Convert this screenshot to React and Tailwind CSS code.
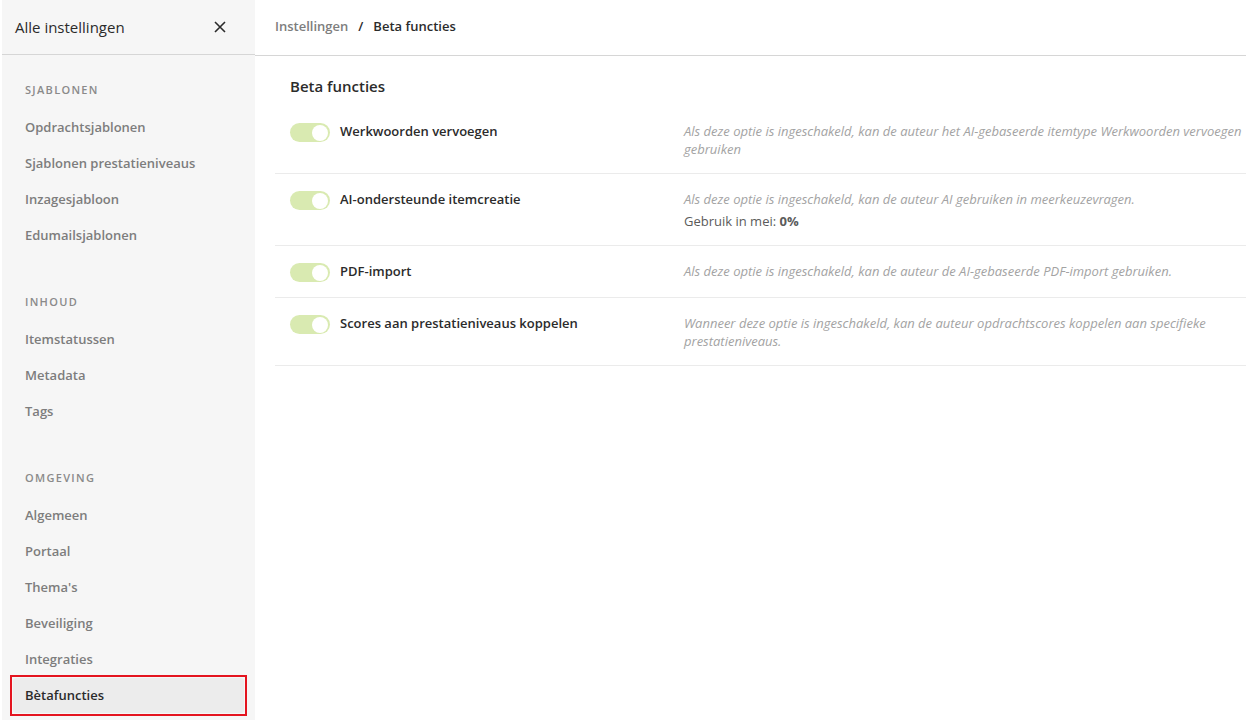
import React from "react";

const SECTIONS = [
  {
    title: "Sjablonen",
    items: ["Opdrachtsjablonen", "Sjablonen prestatieniveaus", "Inzagesjabloon", "Edumailsjablonen"],
  },
  { title: "Inhoud", items: ["Itemstatussen", "Metadata", "Tags"] },
  {
    title: "Omgeving",
    items: ["Algemeen", "Portaal", "Thema's", "Beveiliging", "Integraties", "Bètafuncties"],
  },
];

const FEATURES = [
  {
    label: "Werkwoorden vervoegen",
    desc: "Als deze optie is ingeschakeld, kan de auteur het AI-gebaseerde itemtype Werkwoorden vervoegen gebruiken",
  },
  {
    label: "AI-ondersteunde itemcreatie",
    desc: "Als deze optie is ingeschakeld, kan de auteur AI gebruiken in meerkeuzevragen.",
    usage: true,
  },
  {
    label: "PDF-import",
    desc: "Als deze optie is ingeschakeld, kan de auteur de AI-gebaseerde PDF-import gebruiken.",
  },
  {
    label: "Scores aan prestatieniveaus koppelen",
    desc: "Wanneer deze optie is ingeschakeld, kan de auteur opdrachtscores koppelen aan specifieke prestatieniveaus.",
  },
];

function Toggle() {
  return (
    <div className="w-[40px] h-[19px] mt-[1px] rounded-full bg-[#d9eab1] flex items-center justify-end pr-[2px] shrink-0">
      <div className="w-[16px] h-[16px] rounded-full bg-white" />
    </div>
  );
}

export default function App() {
  return (
    <div
      className="flex w-[1246px] h-[720px] bg-white overflow-hidden text-[#2b2b2b]"
      style={{ fontFamily: '"Open Sans", "Noto Sans", sans-serif' }}
    >
      {/* Sidebar */}
      <aside className="w-[255px] shrink-0 bg-[#f6f6f6] flex flex-col border-l-2 border-white">
        <div className="h-[55px] flex items-center justify-between pl-[13px] pr-[29px] border-b border-[#d6d6d6]">
          <span className="text-[15px] text-[#2b2b2b]">Alle instellingen</span>
          <svg width="12" height="12" viewBox="0 0 12 12" className="text-[#2b2b2b]">
            <path d="M1 1 L11 11 M11 1 L1 11" stroke="currentColor" strokeWidth="1.6" fill="none" />
          </svg>
        </div>
        <nav className="flex flex-col pt-[17px]">
          {SECTIONS.map((s, si) => (
            <div key={s.title} className={si > 0 ? "mt-[30px]" : ""}>
              <div className="h-[36px] flex items-center pl-[23px] text-[11px] font-semibold uppercase tracking-[0.12em] text-[#8a8a8a]">
                {s.title}
              </div>
              <div className="flex flex-col pt-[2px]">
                {s.items.map((it) => {
                  const active = it === "Bètafuncties";
                  return active ? (
                    <div key={it} className="mx-[8px] border-2 border-[#e4141f] p-[1px] h-[41px] -mt-[3px]">
                      <div className="h-full bg-[#ececec] rounded-[3px] flex items-center pl-[12px] text-[13px] font-semibold text-[#2b2b2b]">
                        {it}
                      </div>
                    </div>
                  ) : (
                    <div key={it} className="h-[36px] flex items-center pl-[23px] text-[13px] font-semibold text-[#7d7d7d]">
                      {it}
                    </div>
                  );
                })}
              </div>
            </div>
          ))}
        </nav>
      </aside>

      {/* Main */}
      <main className="flex-1 flex flex-col min-w-0">
        <div className="h-[56px] flex items-center pl-[20px] pb-[2px] border-b border-[#d6d6d6] text-[13px]">
          <span className="text-[#7d7d7d] font-semibold">Instellingen</span>
          <span className="mx-[10px] text-[#2b2b2b] font-semibold">/</span>
          <span className="text-[#2b2b2b] font-semibold">Beta functies</span>
        </div>
        <div className="pl-[20px] pt-[19px]">
          <h1 className="pl-[15px] text-[15px] font-semibold text-[#2b2b2b] leading-[22px]">Beta functies</h1>
          <div className="mt-[9px]">
            {FEATURES.map((f) => (
              <div key={f.label} className="flex border-b border-[#ebebeb] pl-[15px] pt-[16px] pb-[15px]">
                <div className="w-[394px] shrink-0 flex items-start gap-[10px]">
                  <Toggle />
                  <span className="text-[13px] font-semibold text-[#2b2b2b] leading-[19px]">{f.label}</span>
                </div>
                <div className="flex-1 min-w-0">
                  <p className="text-[13px] italic text-[#a3a3a3] leading-[18px]">{f.desc}</p>
                  {f.usage && (
                    <p className="mt-[4px] text-[13px] text-[#5b5b5b] leading-[18px]">
                      Gebruik in mei: <span className="font-bold">0%</span>
                    </p>
                  )}
                </div>
              </div>
            ))}
          </div>
        </div>
      </main>
    </div>
  );
}
